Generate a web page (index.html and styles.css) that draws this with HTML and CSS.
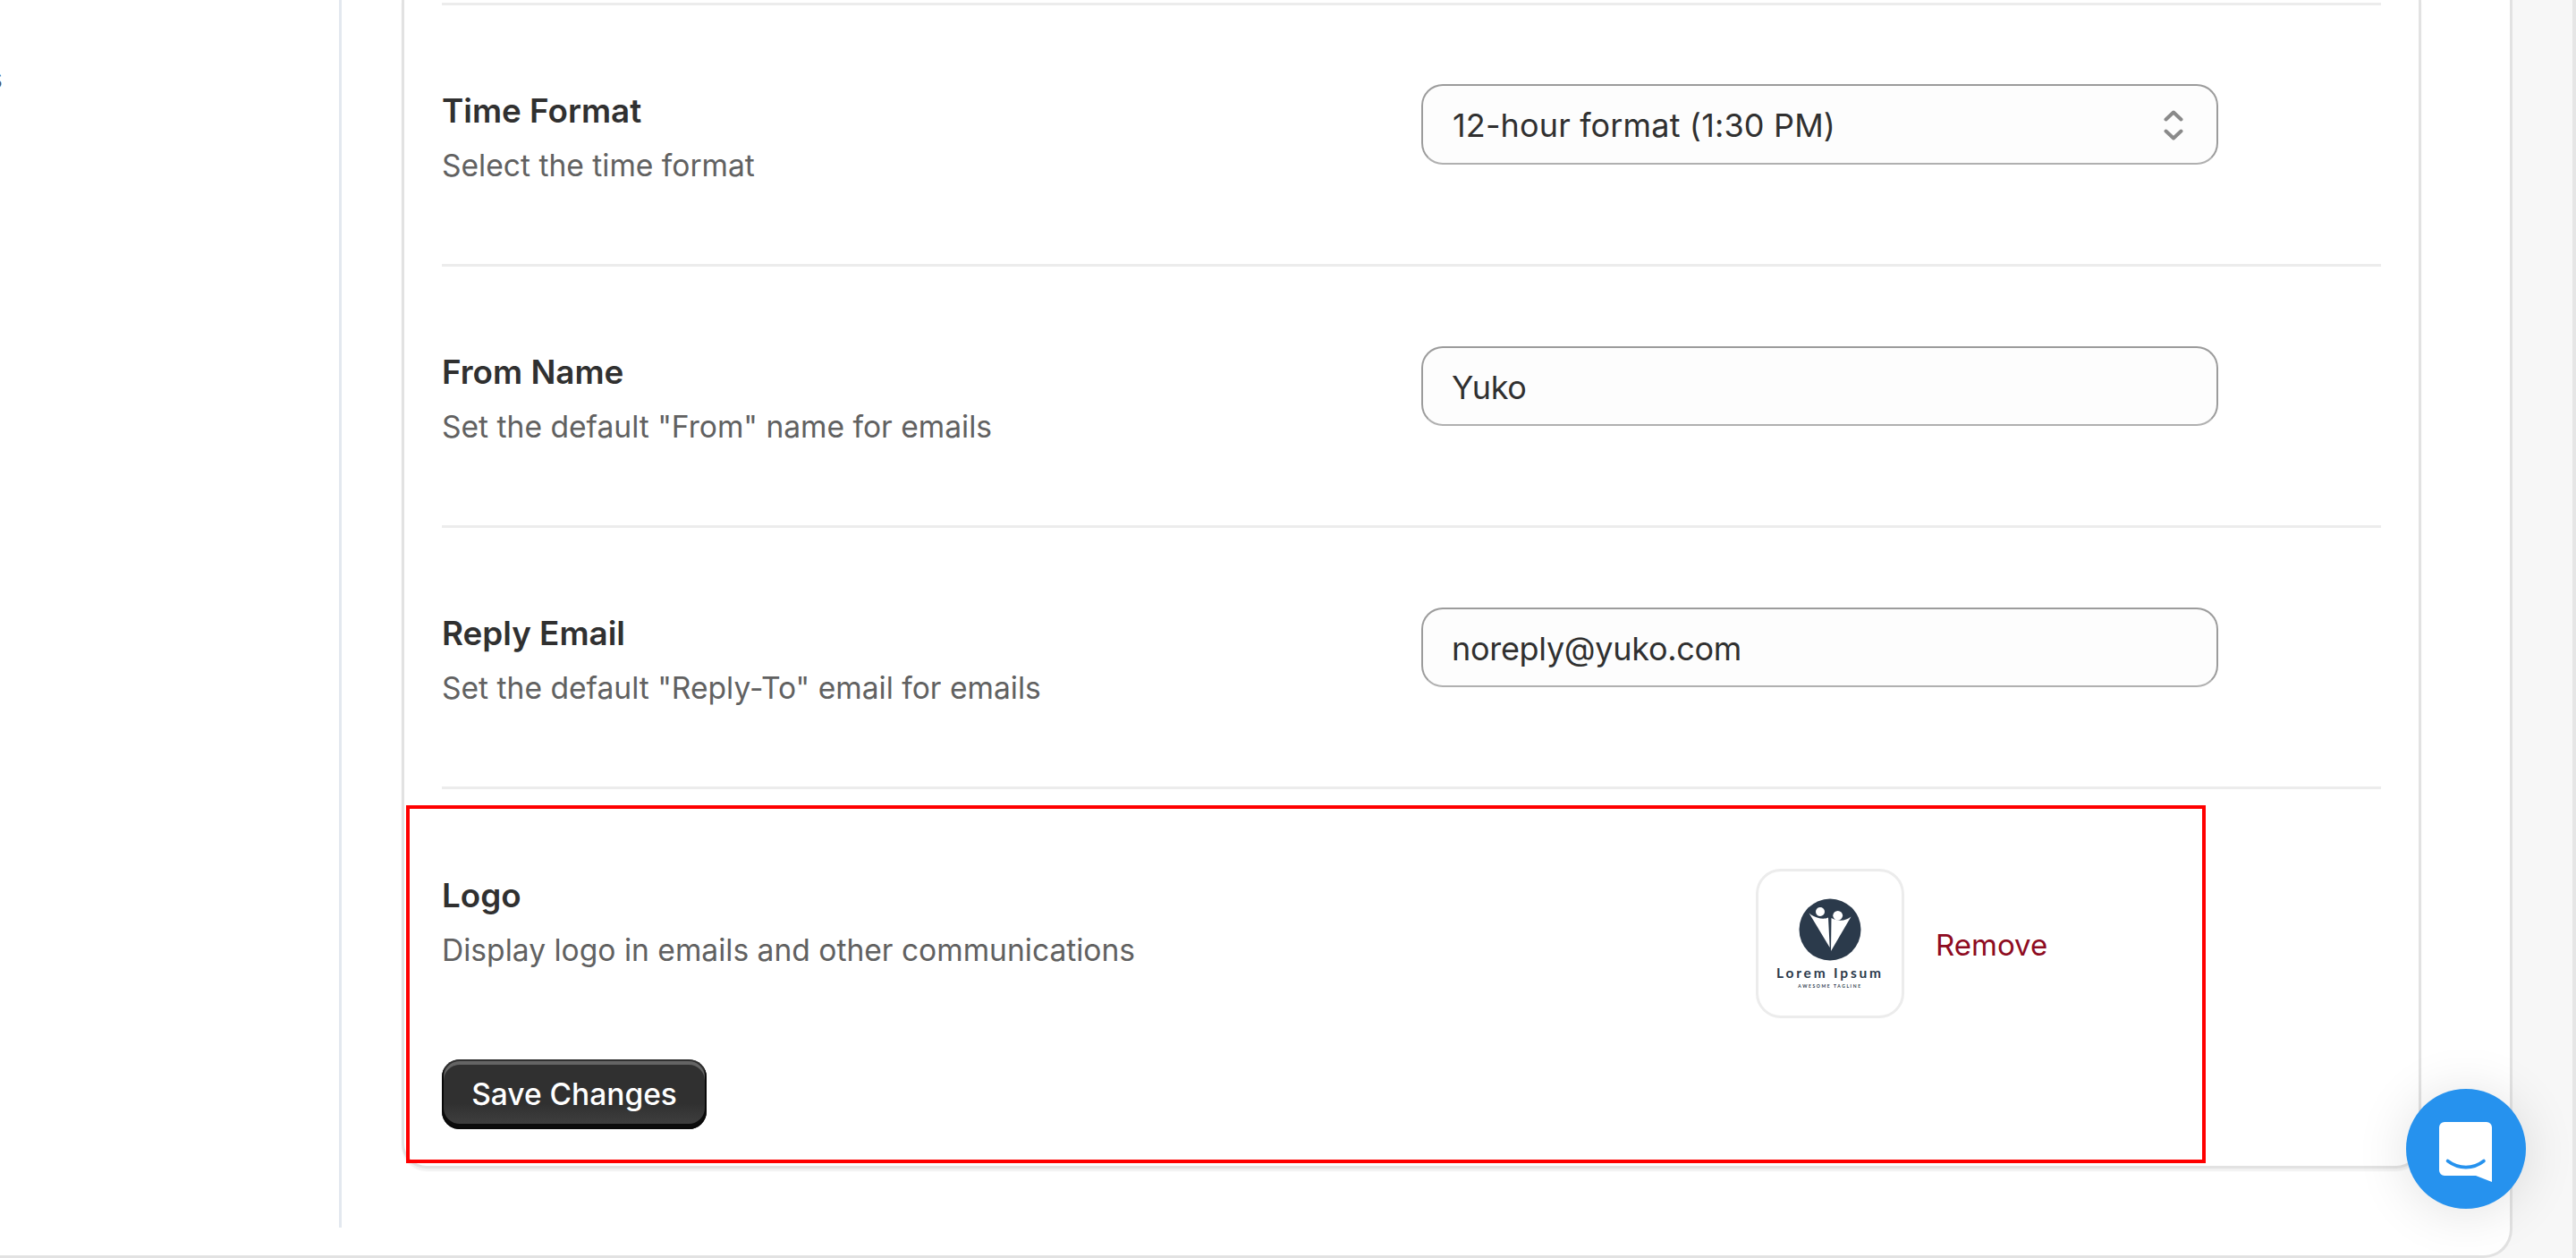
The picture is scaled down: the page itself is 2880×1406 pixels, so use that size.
FILE: index.html
```html
<!DOCTYPE html>
<html lang="en">
<head>
<meta charset="utf-8">
<title>Settings</title>
<link rel="stylesheet" href="styles.css">
</head>
<body>
<div class="frame">
  <aside class="sidebar">
    <div class="nav-label"><span>Settings</span></div>
  </aside>
  <main class="main">
    <section class="card">
      <div class="row">
        <div class="info">
          <h3 class="title">Time Format</h3>
          <p class="desc">Select the time format</p>
        </div>
        <div class="control select">
          <span>12-hour format (1:30 PM)</span>
          <svg class="chev" width="22" height="36" viewBox="0 0 22 36" fill="none" stroke="#8a8a8a" stroke-width="4" stroke-linecap="round" stroke-linejoin="round"><path d="M2.5 11.5 L11 3.5 L19.5 11.5"/><path d="M2.5 24.5 L11 32.5 L19.5 24.5"/></svg>
        </div>
      </div>
      <div class="row">
        <div class="info">
          <h3 class="title">From Name</h3>
          <p class="desc">Set the default "From" name for emails</p>
        </div>
        <input class="control field" type="text" value="Yuko">
      </div>
      <div class="row">
        <div class="info">
          <h3 class="title">Reply Email</h3>
          <p class="desc">Set the default "Reply-To" email for emails</p>
        </div>
        <input class="control field" type="text" value="noreply@yuko.com">
      </div>
      <div class="row row-logo">
        <div class="info">
          <h3 class="title">Logo</h3>
          <p class="desc">Display logo in emails and other communications</p>
          <button class="save" type="button">Save Changes</button>
        </div>
        <div class="logo-area">
          <div class="logo-box">
            <svg width="160" height="160" viewBox="0 0 160 160">
              <circle cx="80" cy="65" r="34.5" fill="#2b3a4b"/>
              <path d="M56.5 46.5 C62 51.5 72 54.5 78 51.5 L79.7 85 Z" fill="#fff"/>
              <path d="M81.5 52 C90 56.5 98 55 103.5 50.5 L81 89 Z" fill="#fff"/>
              <circle cx="69" cy="45" r="5" fill="#fff"/>
              <circle cx="88.7" cy="49.3" r="5.4" fill="#fff"/>
              <text class="logo-name" x="80" y="119" text-anchor="middle">Lorem Ipsum</text>
              <text class="logo-tag" x="80" y="130" text-anchor="middle">AWESOME TAGLINE</text>
            </svg>
          </div>
          <a class="remove" href="#">Remove</a>
        </div>
      </div>
    </section>
  </main>
</div>
<div class="edge"></div>
<div class="highlight"></div>
<div class="chat">
  <svg width="60" height="68" viewBox="0 0 60 68"><path d="M6 0 H53 A6 6 0 0 1 59 6 V67 L41 60 H6 A6 6 0 0 1 0 54 V6 A6 6 0 0 1 6 0 Z" fill="#fff"/><path d="M9.5 43.5 C22 53 38 53 50 43.5" fill="none" stroke="#2692ee" stroke-width="3.6" stroke-linecap="round"/></svg>
</div>
</body>
</html>
```

FILE: styles.css
```css
* { box-sizing: border-box; }
html, body { margin: 0; height: 1406px; overflow: hidden; }
body {
  display: flex;
  background: #f7f7f7;
  font-family: Inter, "Liberation Sans", sans-serif;
  color: #303030;
}
.frame {
  display: flex;
  width: 2809px;
  height: 1406px;
  flex: none;
  background: #fff;
  border-right: 3px solid #e2e2e2;
  border-bottom: 3px solid #e2e2e2;
  border-bottom-right-radius: 32px;
}
.edge {
  margin-left: auto;
  width: 4px;
  background: #e6e6e6;
}
.sidebar {
  width: 382px;
  height: 1372px;
  flex: none;
  padding-top: 66px;
  border-right: 3px solid #e3e8ef;
}
.nav-label {
  display: flex;
  justify-content: flex-end;
  width: 3px;
  font-size: 32px;
  line-height: 44px;
  white-space: nowrap;
  color: #4a5568;
}
.main { flex: 1; padding-left: 67px; }
.card {
  width: 2258px;
  height: 1306px;
  padding: 3px 42px 0;
  background: #fff;
  border: 3px solid #e2e2e2;
  border-top: 0;
  border-radius: 0 0 28px 28px;
  box-shadow: 0 3px 2px rgba(0,0,0,.06);
}
.row {
  display: flex;
  height: 292px;
  padding-top: 88px;
  border-top: 3px solid #ececec;
}
.row-logo { height: auto; padding-top: 89px; }
.info { width: 1095px; flex: none; padding-top: 8px; }
.title {
  margin: 0;
  font-size: 36.8px;
  line-height: 44px;
  font-weight: 600;
  color: #303030;
}
.desc {
  margin: 17px 0 0;
  font-size: 33.6px;
  line-height: 44px;
  font-weight: 400;
  color: #616161;
}
.control {
  display: flex;
  align-items: center;
  justify-content: space-between;
  width: 891px;
  height: 90px;
  padding: 2px 35px 0 33px;
  background: #fdfdfd;
  border: 2px solid #9c9c9c;
  border-bottom-color: #b0b0b0;
  border-radius: 24px;
  font-family: inherit;
  font-size: 36px;
  letter-spacing: .15px;
  color: #303030;
  outline: none;
}
.field {
  height: 89px;
  margin-top: 1px;
  padding-left: 32px;
  letter-spacing: -.3px;
}
.chev { display: block; margin-right: 2px; }
.save {
  display: block;
  margin-top: 100px;
  width: 296px;
  height: 78px;
  padding: 0;
  border: 0;
  border-radius: 20px;
  background: linear-gradient(180deg, #303030 63%, #424242);
  box-shadow: inset 0 -4px 0 2px rgba(0,0,0,.8), inset 0 0 0 2px #303030, inset 0 4px 0 2px rgba(255,255,255,.25);
  font-family: inherit;
  font-size: 33.5px;
  font-weight: 500;
  color: #fff;
}
.logo-area {
  display: flex;
  align-items: center;
  gap: 35px;
  height: 169px;
  padding-left: 374px;
}
.logo-box {
  width: 166px;
  height: 167px;
  margin-bottom: 2px;
  border: 3px solid #ececec;
  border-radius: 28px;
  background: #fff;
}
.logo-box svg { display: block; }
.logo-name {
  font-family: Lato, "Noto Sans", sans-serif;
  font-size: 15.5px;
  font-weight: 700;
  letter-spacing: 2.8px;
  fill: #2b3a4b;
}
.logo-tag {
  font-family: Lato, "Noto Sans", sans-serif;
  font-size: 5px;
  font-weight: 700;
  letter-spacing: 1.6px;
  fill: #2b3a4b;
}
.remove {
  font-size: 33px;
  line-height: 44px;
  color: #8e0b21;
  text-decoration: none;
}
.highlight {
  position: absolute;
  left: 454px;
  top: 900px;
  width: 2012px;
  height: 400px;
  border: 4px solid #f00;
}
.chat {
  position: absolute;
  left: 2690px;
  top: 1217px;
  width: 134px;
  height: 134px;
  display: flex;
  align-items: center;
  justify-content: center;
  padding-top: 8px;
  border-radius: 50%;
  background: #2692ee;
  box-shadow: 0 4px 60px rgba(0,0,0,.12);
}
```
